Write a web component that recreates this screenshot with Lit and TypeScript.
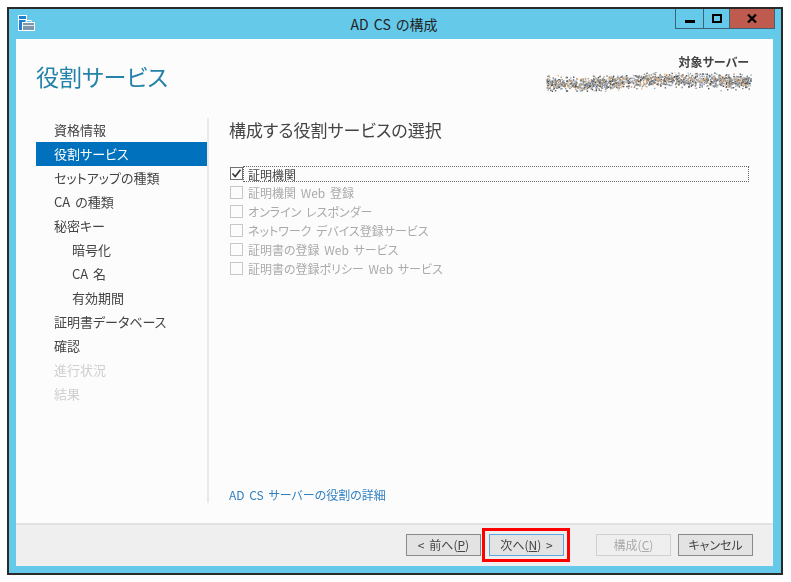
import { LitElement, html, css, svg } from "lit";
import { customElement } from "lit/decorators.js";

const NAV: { t: string; cls: string }[] = [
  { t: "資格情報", cls: "" },
  { t: "役割サービス", cls: "sel" },
  { t: "セットアップの種類", cls: "" },
  { t: "CA の種類", cls: "" },
  { t: "秘密キー", cls: "" },
  { t: "暗号化", cls: "sub" },
  { t: "CA 名", cls: "sub" },
  { t: "有効期間", cls: "sub" },
  { t: "証明書データベース", cls: "" },
  { t: "確認", cls: "" },
  { t: "進行状況", cls: "off" },
  { t: "結果", cls: "off" },
];
const ROLES = [
  "証明機関 Web 登録",
  "オンライン レスポンダー",
  "ネットワーク デバイス登録サービス",
  "証明書の登録 Web サービス",
  "証明書の登録ポリシー Web サービス",
];

function noise() {
  let s = 12345;
  const r = () => ((s = (s * 1103515245 + 12345) & 0x7fffffff) / 0x7fffffff);
  const cols = ["#7a7a7a", "#5f6468", "#b09a7e", "#e6b682", "#93aecb", "#4a4f55", "#bdbdbd", "#8f8f8f"];
  const out = [];
  for (let i = 0; i < 1500; i++) {
    const x = r() * 205;
    const wave = Math.sin(x / 24) * 1.5 - x / 60;
    const y = 10.5 + wave + (r() + r() + r() - 1.5) * 6.5;
    out.push(svg`<rect x=${x.toFixed(1)} y=${y.toFixed(1)} width="1.4" height="1.4" fill=${cols[Math.floor(r() * cols.length)]}></rect>`);
  }
  return out;
}

@customElement("app-root")
export class AppRoot extends LitElement {
  static styles = css`
    :host { display: block; width: 791px; height: 582px; background: #fff; padding: 7px 8px 7px 7px; box-sizing: border-box;
      font-family: "Noto Sans CJK JP", "Noto Sans", sans-serif; color: #444; overflow: hidden;
      font-feature-settings: "palt"; word-spacing: 2px; }
    .win { height: 568px; border: 2px solid #2a2a2a; background: #65c9ea; box-sizing: border-box; display: flex; flex-direction: column; padding: 0 8px 7px 7px; }
    .title { height: 30px; flex: none; display: flex; align-items: flex-start; position: relative; margin: 0 -6px 0 -7px; }
    .ico { position: absolute; left: 8px; top: 5px; }
    .cap { flex: 1; text-align: center; font-size: 14px; line-height: 30px; color: #222; }
    .ctl { position: absolute; right: 4px; top: 0; display: flex; height: 20px; border: 1px solid #3d6475; border-top: 0; box-sizing: border-box; }
    .ctl span { display: flex; align-items: center; justify-content: center; box-sizing: border-box; }
    .ctl .mn { width: 28px; border-right: 1px solid #3d6475; }
    .ctl .mx { width: 26px; border-right: 1px solid #3d6475; }
    .ctl .cl { width: 44px; background: #bf5a4f; }
    .client { flex: 1; background: #fcfcfc; display: flex; flex-direction: column; min-height: 0; }
    .head { height: 79px; flex: none; display: flex; justify-content: space-between; padding: 0 21px 0 20px; box-sizing: border-box; }
    .h1 { font-size: 23px; line-height: 32px; margin-top: 21px; color: #2482a8; font-weight: 400; filter: blur(0.3px); }
    .srv { display: flex; flex-direction: column; align-items: flex-end; margin-top: 15px; }
    .srv b { font-size: 12px; line-height: 16px; font-weight: 700; color: #444; padding-right: 3px; filter: blur(0.3px); }
    .srv svg { display: block; margin-top: 2px; filter: blur(0.35px); }
    .body { flex: 1; display: flex; min-height: 0; }
    .nav { width: 171px; margin-left: 20px; flex: none; }
    .nav div { height: 24px; line-height: 24px; font-size: 13px; padding-left: 18px; box-sizing: border-box; color: #444; white-space: nowrap; }
    .nav span, .h2, .row > .t, .lab, .link, .btn > span { filter: blur(0.3px); }
    .nav span { display: inline-block; }
    .nav .sub { padding-left: 36px; }
    .nav .off { color: #cfcfcf; }
    .nav .sel { background: #0072bd; color: #fff; }
    .main { flex: 1; margin-bottom: 20px; border-left: 2px solid #e9e9e9; padding-left: 20px; padding-right: 24px; display: flex; flex-direction: column; min-width: 0; }
    .h2 { font-size: 17px; line-height: 24px; color: #444; font-weight: 400; }
    .list { margin-top: 22px; }
    .row { height: 19px; display: flex; align-items: center; font-size: 12px; color: #aaa; white-space: nowrap; }
    .box { width: 13px; height: 13px; border: 1px solid #c8c8c8; box-sizing: border-box; background: #fcfcfc; flex: none; margin-right: 5px; margin-left: 1px; display: flex; align-items: center; justify-content: center; }
    .row.on { color: #444; }
    .row.on .box { border-color: #707070; margin-right: 0; }
    .row.on .lab { flex: 1; height: 16px; line-height: 15px; border: 1px dotted #666; box-sizing: border-box; padding-left: 4px; }
    .link { margin-top: auto; font-size: 12px; line-height: 16px; color: #2f7fc1; }
    .foot { height: 43px; flex: none; background: #efefef; border-top: 2px solid #e2e2e2; box-sizing: border-box; display: flex; justify-content: flex-end; padding: 9px 20px 0 0; }
    .btn { position: relative; width: 75px; height: 22px; border: 1px solid #8a8a8a; background: #e3e3e3; box-sizing: border-box; font-size: 12px; line-height: 20px; text-align: center; color: #444; margin-left: 8px; white-space: nowrap; }
    .btn > span { display: inline-block; }
    .btn u { text-underline-offset: 1px; }
    .btn.next { border-color: #5ba7e0; }
    .btn.next::after { content: ""; position: absolute; left: -8px; top: -7px; width: 88px; height: 34px; border: 3px solid #f00; box-sizing: border-box; }
    .btn.dis { border-color: #d0d0d0; background: #efefef; color: #aaa; margin-left: 32px; }
    .btn.cancel { margin-left: 7px; }
  `;

  render() {
    return html`<div class="win">
      <div class="title">
        <svg class="ico" width="20" height="20" viewBox="0 0 20 20">
          <rect x="1.5" y="1.5" width="8" height="15" fill="#1f7fd0" stroke="#fff"></rect>
          <rect x="2" y="5" width="7" height="1" fill="#fff"></rect>
          <rect x="5.5" y="8.5" width="12" height="8" fill="#7d96a8" stroke="#fff"></rect>
          <rect x="9" y="6.5" width="5" height="2" fill="none" stroke="#fff"></rect>
          <rect x="6" y="11" width="11" height="1" fill="#dfe8ee"></rect>
        </svg>
        <div class="cap">AD CS の構成</div>
        <div class="ctl">
          <span class="mn"><svg width="10" height="10"><rect x="0" y="6" width="10" height="3" fill="#000"></rect></svg></span>
          <span class="mx"><svg width="10" height="9"><rect x="1" y="1" width="8" height="7" fill="none" stroke="#000" stroke-width="2"></rect></svg></span>
          <span class="cl"><svg width="10" height="9"><path d="M1 0.5 L9 8.5 M9 0.5 L1 8.5" stroke="#000" stroke-width="2.2" fill="none"></path></svg></span>
        </div>
      </div>
      <div class="client">
        <div class="head">
          <div class="h1">役割サービス</div>
          <div class="srv"><b>対象サーバー</b>
            <svg width="206" height="20" viewBox="0 0 206 20">${noise()}</svg>
          </div>
        </div>
        <div class="body">
          <div class="nav">${NAV.map((n) => html`<div class=${n.cls}><span>${n.t}</span></div>`)}</div>
          <div class="main">
            <div class="h2">構成する役割サービスの選択</div>
            <div class="list">
              <div class="row on">
                <span class="box"><svg width="11" height="11" viewBox="0 0 11 11"><path d="M1.5 5.5 L4.2 8.5 L9.5 1.8" fill="none" stroke="#333" stroke-width="1.6"></path></svg></span>
                <span class="lab">証明機関</span>
              </div>
              ${ROLES.map((r) => html`<div class="row"><span class="box"></span><span class="t">${r}</span></div>`)}
            </div>
            <div class="link">AD CS サーバーの役割の詳細</div>
          </div>
        </div>
        <div class="foot">
          <div class="btn"><span>&lt; 前へ(<u>P</u>)</span></div>
          <div class="btn next"><span>次へ(<u>N</u>) &gt;</span></div>
          <div class="btn dis"><span>構成(<u>C</u>)</span></div>
          <div class="btn cancel"><span>キャンセル</span></div>
        </div>
      </div>
    </div>`;
  }
}
